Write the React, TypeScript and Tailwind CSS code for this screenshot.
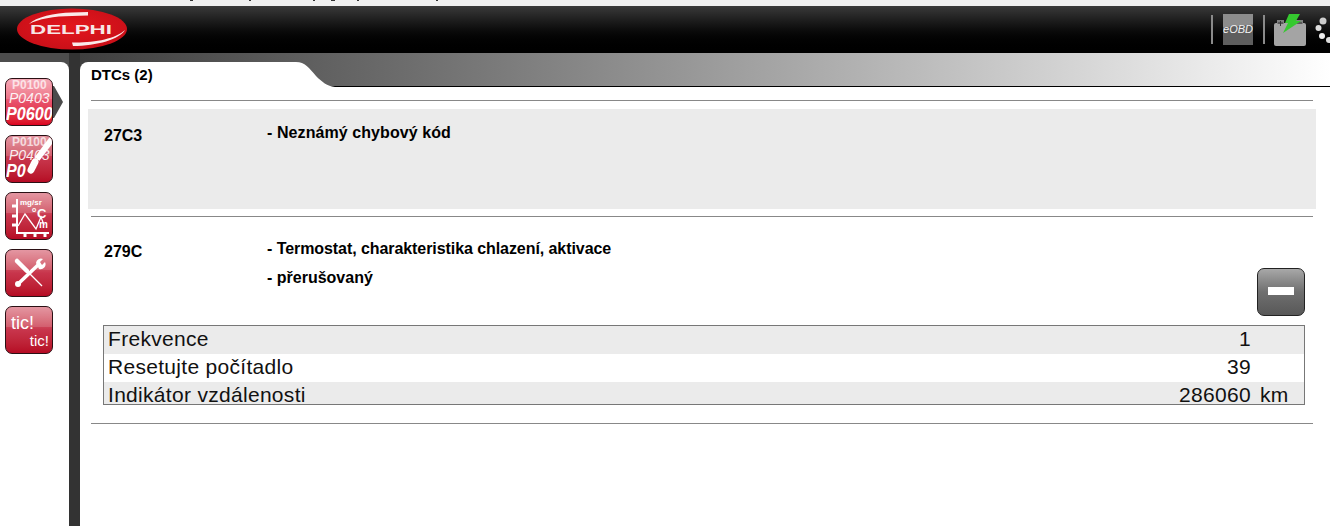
const font = "font-['Liberation_Sans',Arial,sans-serif]";

// cut off bits of the window title that still show above the header
const titleBits = [
  { ml: 190, w: 3 },
  { ml: 56, w: 2 },
  { ml: 62, w: 2 },
  { ml: 16, w: 4 },
  { ml: 22, w: 2 },
  { ml: 77, w: 2 },
];

function SideButton({ active, children }: { active?: boolean; children: React.ReactNode }) {
  return (
    <div className="relative h-12 w-12 shrink-0">
      {active && (
        <svg width="12" height="32" viewBox="0 0 12 32" className="absolute left-[46px] top-2">
          <path d="M0 0h3l9 16-9 16H0z" fill="#4b4b4b" />
        </svg>
      )}
      <div
        className={`relative h-12 w-12 overflow-hidden rounded-[7px] border border-[#2a1014] bg-gradient-to-b ${
          active ? "from-[#f59aab] via-[#e8506a] to-[#dc0020]" : "from-[#df8492] via-[#c8354c] to-[#b60a24]"
        }`}
      >
        <div className="absolute left-0 right-0 top-0 h-[20px] bg-white/15" />
        {children}
      </div>
    </div>
  );
}

function CodesText({ erased }: { erased?: boolean }) {
  return (
    <div className={`absolute left-0 top-0 w-full whitespace-nowrap text-white ${font}`}>
      <div className="pl-[6px] text-[12px] font-bold leading-[12px] opacity-70">P0100</div>
      <div className="pl-[3px] text-[14px] italic leading-[14px] opacity-90">P0403</div>
      <div className="origin-left scale-x-[0.85] text-[19px] font-bold italic leading-[18px]">{erased ? "P0" : "P0600"}</div>
    </div>
  );
}

function Minus() {
  return (
    <div className="flex h-12 w-12 items-center justify-center rounded-[7px] border border-[#222] bg-gradient-to-b from-[#a8a8a8] via-[#6f6f6f] to-[#585858]">
      <div className="-mt-[2px] h-[8px] w-[26px] bg-white" />
    </div>
  );
}

function Row({ label, value, unit, shaded, cut }: { label: string; value: string; unit?: string; shaded?: boolean; cut?: boolean }) {
  return (
    <div className={`flex items-start overflow-hidden pl-1 ${cut ? "h-[22px]" : "h-[28px]"} ${shaded ? "bg-[#ebebeb]" : "bg-white"} text-[21px] leading-[26px] tracking-[0.3px] text-[#111]`}>
      <span className="flex-1 whitespace-nowrap">{label}</span>
      <span className="whitespace-nowrap text-right">{value}</span>
      <span className="w-[53px] whitespace-nowrap pl-[9px]">{unit}</span>
    </div>
  );
}

export default function App() {
  return (
    <div className={`flex h-[526px] w-[1330px] flex-col overflow-hidden bg-white ${font}`}>
      <div className="flex h-[6px] shrink-0 items-start bg-[#f0f0f0]">
        {titleBits.map((b, i) => (
          <div key={i} className="h-[1px] bg-[#333]" style={{ marginLeft: b.ml, width: b.w }} />
        ))}
      </div>

      <header className="flex h-[47px] shrink-0 items-center justify-between bg-gradient-to-b from-[#3a3a3a] via-[#0d0d0d] to-black">
        <svg width="112" height="42" viewBox="0 0 112 42" className="ml-[16px] mt-[-1px]">
          <defs>
            <radialGradient id="logoRed" cx="50%" cy="45%" r="60%">
              <stop offset="0%" stopColor="#e3161d" />
              <stop offset="100%" stopColor="#c80f18" />
            </radialGradient>
          </defs>
          <ellipse cx="56" cy="21" rx="55" ry="20.5" fill="url(#logoRed)" />
          <path d="M13 16C20 9 38 5 56 4.500l16-.5v3.500L56 8C38 8 22 11 13 16z" fill="#fbeaea" />
          <path d="M109 22c-5 9-28 16-52 16l-1-3.500h4c20 0 40-4 49-12.500z" fill="#fbeaea" />
          <text x="55" y="26" textAnchor="middle" textLength="82" lengthAdjust="spacingAndGlyphs" fontFamily="Liberation Sans" fontWeight="700" fontSize="13.500" fill="#f7e6e6">DELPHI</text>
        </svg>

        <div className="flex items-center">
          <div className="h-[29px] w-[2px] bg-[#8a8a8a]" />
          <div className="relative ml-[10px] flex h-[31px] w-[30px] items-center justify-center overflow-hidden bg-[#5e5e5e]">
            <div className="absolute -left-[2px] -top-[2px] h-[14px] w-[34px] -skew-y-6 bg-[#8c8c8c]" />
            <span className="relative text-[11px] italic leading-none text-[#f2f2f2]">eOBD</span>
          </div>
          <div className="ml-[10px] h-[29px] w-[2px] bg-[#8a8a8a]" />
          <svg width="34" height="34" viewBox="0 0 34 34" className="ml-[9px]">
            <rect x="0" y="10" width="32" height="23" rx="2" fill="#a4a4a4" />
            <rect x="3" y="7" width="7" height="4" fill="#808080" />
            <rect x="22" y="7" width="7" height="4" fill="#808080" />
            <path d="M4 10h5M6.500 8v5M23 10h5" stroke="#333" strokeWidth="1" />
            <path d="M15 1h11l-4 7h5L9 20l5-10h-3z" fill="#35c92f" />
          </svg>
          <svg width="15" height="34" viewBox="0 0 15 34" className="ml-[7px]">
            <circle cx="8" cy="8" r="3.500" fill="#ccc" />
            <circle cx="3.500" cy="15" r="3" fill="#ddd" />
            <circle cx="7" cy="23" r="3" fill="#eee" />
            <circle cx="14" cy="27" r="3" fill="#ddd" />
          </svg>
        </div>
      </header>

      <div className="flex min-h-0 flex-1 bg-[#333]">
        <div className="flex w-[69px] shrink-0 flex-col bg-[#4d4d4d]">
          <aside className="mt-[9px] flex flex-1 flex-col gap-[9px] rounded-tr-[8px] bg-white pl-[5px] pt-[16px]">
            <SideButton active>
              <CodesText />
            </SideButton>
            <SideButton>
              <CodesText erased />
              <svg width="48" height="48" viewBox="0 0 48 48" className="absolute left-0 top-0">
                <path d="M46 3 31 23" stroke="#fff" strokeWidth="6" />
                <path d="M29 26 25 34" stroke="#fff" strokeWidth="7" strokeLinecap="round" strokeDasharray="3 1" />
              </svg>
            </SideButton>
            <SideButton>
              <svg width="48" height="48" viewBox="0 0 48 48" className="absolute left-0 top-0" fill="none">
                <path d="M11 6v34h32" stroke="#fff" strokeWidth="2" />
                <path d="M6 13h5M6 23h5M6 32h5M19 40v4M29 40v4M39 40v4" stroke="#fff" strokeWidth="3" />
                <path d="M12 33 19 21l11 15 5-12 3 8" stroke="#fff" strokeWidth="1.300" />
              </svg>
              <span className="absolute left-[14px] top-[6px] text-[8px] font-bold leading-none text-white">mg/sr</span>
              <span className="absolute left-[26px] top-[13px] text-[7px] font-bold leading-none text-white">o</span>
              <span className="absolute left-[31px] top-[14px] text-[13px] font-bold leading-none text-white">C</span>
              <span className="absolute left-[33px] top-[27px] text-[10px] font-bold leading-none text-white">m</span>
            </SideButton>
            <SideButton>
              <svg width="48" height="48" viewBox="0 0 48 48" className="absolute left-0 top-0" fill="none">
                <path d="M11 11 36 36" stroke="#fff" strokeWidth="1.300" />
                <path d="M11 11 21 21" stroke="#fff" strokeWidth="4.500" strokeLinecap="round" />
                <path d="M32 15 12 34" stroke="#fff" strokeWidth="3.500" strokeLinecap="round" />
                <path d="M30 13a5 5 0 0 1 7-4l-3 3 2 3 3-3a5 5 0 0 1-6 7z" fill="#fff" />
                <circle cx="12" cy="34" r="3" fill="#fff" />
              </svg>
            </SideButton>
            <SideButton>
              <span className="absolute left-[5px] top-[6px] text-[18px] leading-[20px] text-white">tic!</span>
              <span className="absolute right-[3px] top-[25px] text-[15px] leading-[17px] text-white">tic!</span>
            </SideButton>
          </aside>
        </div>

        <div className="ml-[11px] flex min-w-0 flex-1 flex-col bg-white">
          <div className="relative h-[34px] shrink-0 border-b border-black bg-gradient-to-r from-[#3f3f3f] via-[#9a9a9a] to-white">
            <div className="absolute bottom-[-1px] left-0 flex h-[25px] w-[260px] items-center">
              <div className="h-full w-[214px] rounded-tl-[8px] bg-white pl-[11px] pt-[3px] text-[15px] font-bold leading-[20px] text-black">
                DTCs (2)
              </div>
              <svg width="42" height="25" viewBox="0 0 42 25" className="-ml-px">
                <path d="M0 0h3c9 0 13 6 20 14 6 6 11 10 19 11H0z" fill="#fff" />
              </svg>
            </div>
          </div>

          <div className="pl-[8px] pr-[14px] text-black">
            <div className="ml-[3px] mr-[3px] mt-[13px] h-px bg-[#888]" />
            <section className="mt-2 flex h-[100px] bg-[#ebebeb] pl-4 pt-[12px] text-[16px] font-bold">
              <span className="mt-[3px] w-[163px]">27C3</span>
              <span className="tracking-[0.08px]">- Neznámý chybový kód</span>
            </section>
            <div className="ml-[3px] mr-[3px] mt-[7px] h-px bg-[#888]" />

            <section className="relative flex h-[108px] pl-4 pt-[20px] text-[16px] font-bold">
              <span className="mt-[3px] w-[163px]">279C</span>
              <div className="flex flex-col gap-[5px]">
                <span className="tracking-[-0.07px]">- Termostat, charakteristika chlazení, aktivace</span>
                <span>- přerušovaný</span>
              </div>
              <div className="absolute right-[11px] top-[51px]">
                <Minus />
              </div>
            </section>

            <div className="ml-[15px] mr-[11px] border border-[#777]">
              <Row label="Frekvence" value="1" shaded />
              <Row label="Resetujte počítadlo" value="39" />
              <Row label="Indikátor vzdálenosti" value="286060" unit="km" shaded cut />
            </div>
            <div className="ml-[3px] mr-[3px] mt-[18px] h-px bg-[#888]" />
          </div>
        </div>
      </div>
    </div>
  );
}
